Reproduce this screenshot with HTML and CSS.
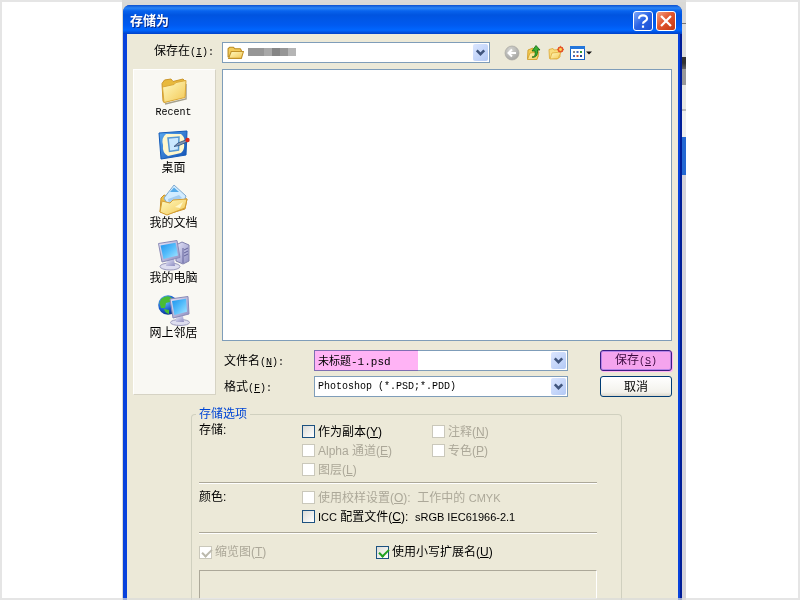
FILE: index.html
```html
<!DOCTYPE html>
<html lang="zh-CN">
<head>
<meta charset="utf-8">
<title>存储为</title>
<link rel="stylesheet" href="styles.css">
</head>
<body>
<svg class="defs" aria-hidden="true">
  <defs>
    <linearGradient id="gold" x1="0" y1="0" x2="1" y2="1"><stop offset="0" stop-color="#fffbc4"/><stop offset="1" stop-color="#f3c752"/></linearGradient>
    <linearGradient id="screen" x1="0" y1="0" x2="1" y2="1"><stop offset="0" stop-color="#1b92ec"/><stop offset=".5" stop-color="#55bdfb"/><stop offset="1" stop-color="#a8e6ff"/></linearGradient>
    <linearGradient id="metal" x1="0" y1="0" x2="1" y2="1"><stop offset="0" stop-color="#e6e6fa"/><stop offset="1" stop-color="#8d8dc0"/></linearGradient>
    <linearGradient id="blue" x1="0" y1="0" x2="1" y2="1"><stop offset="0" stop-color="#5aaaf0"/><stop offset="1" stop-color="#1250b4"/></linearGradient>
    <radialGradient id="globe" cx=".35" cy=".3" r=".75"><stop offset="0" stop-color="#70c8ff"/><stop offset=".6" stop-color="#1b5fd0"/><stop offset="1" stop-color="#0b2f85"/></radialGradient>
    <radialGradient id="disc" cx=".4" cy=".3" r=".8"><stop offset="0" stop-color="#d6d6d2"/><stop offset="1" stop-color="#9f9f9c"/></radialGradient>
  </defs>
</svg>
<main class="stage">
  <section class="window" aria-label="存储为">
    <header class="titlebar">
      <h1>存储为</h1>
      <button class="caption help" aria-label="帮助"><svg viewBox="0 0 20 20"><path d="M5.500 7.500C5.500 2.500 14.500 2.500 14.500 7.500C14.500 10.500 10 10 10 13M10 15V17.500" fill="none" stroke="#fff" stroke-width="2.400"/></svg></button>
      <button class="caption close" aria-label="关闭"><svg viewBox="0 0 20 20"><path d="M4.500 4.500L15.500 15.500M15.500 4.500L4.500 15.500" stroke="#fff" stroke-width="2.500"/></svg></button>
    </header>
    <div class="body">
      <div class="toolbar">
        <label class="song" for="folder">保存在<span class="mono">(<u>I</u>):</span></label>
        <div class="combo folder">
          <select id="folder"><option></option></select>
          <svg class="small-folder" viewBox="0 0 16 16"><path d="M1 12V4.500L2.500 3H6L7.500 4.500H12.500L13.500 6V12Z" fill="#f3cb5a" stroke="#b98a20"/><path d="M1.500 13.500L4 7H15.500L13.500 13.500Z" fill="url(#gold)" stroke="#c2932a"/></svg>
          <span class="mosaic"><i></i><i></i><i></i><i></i><i></i><i></i></span>
          <span class="arrow"><svg viewBox="0 0 14 16"><path d="M3.500 6L7 9.500L10.500 6" fill="none" stroke="#40557d" stroke-width="2.400"/></svg></span>
        </div>
        <div class="tools">
          <button aria-label="后退"><svg viewBox="0 0 16 16"><circle cx="8" cy="8" r="7" fill="url(#disc)" stroke="#aaa9a4" stroke-width=".7"/><path d="M12 8H5M8 4.500L4.500 8L8 11.500" fill="none" stroke="#fff" stroke-width="2"/></svg></button>
          <button aria-label="向上一级"><svg viewBox="0 0 16 16"><path d="M1.500 14L2 5L7 3L8 5L12 4V12L10 14.500Z" fill="#f4cc50" stroke="#d3a233"/><path d="M1.500 14.500L4 8L13 7L11 14.500Z" fill="url(#gold)" stroke="#d2a02c" stroke-width=".8"/><path d="M6 12C9 12 9.500 10 9 6H6L10 .5L14 5H11.500C12 10 10 13 6 12Z" fill="#39ad32" stroke="#146815" stroke-width=".8"/></svg></button>
          <button aria-label="新建文件夹"><svg viewBox="0 0 16 16"><path d="M1.500 13.500L1 4.500L5 3.500L6 5L11 4.500L12 8V12L9 14Z" fill="#f9dc7c" stroke="#e3b44a"/><path d="M2 14L4 8L13 7L10 13.500Z" fill="url(#gold)" stroke="#dfae3c" stroke-width=".8"/><circle cx="12.500" cy="4.500" r="2.200" fill="#ffd74e" stroke="#e4532b" stroke-width="1.500"/><path d="M12.500 .8V2M9 4.500H10M15 4.500H16M10 2L11 3M15 2L14 3M10 7L11 6M15 7L14 6" stroke="#e86436"/></svg></button>
          <button class="views" aria-label="查看方式"><svg viewBox="0 0 22 16"><rect x=".5" y="1.500" width="14" height="13" fill="#fff" stroke="#1763c5"/><path d="M0 2.500H15" stroke="#2376db" stroke-width="3"/><path d="M3 6h2v2H3z" fill="#888"/><path d="M6.500 6h2v2h-2z" fill="#4668bd"/><path d="M10 6h2v2h-2z" fill="#329632"/><path d="M3 10h2v2H3z" fill="#4668bd"/><path d="M6.500 10h2v2h-2z" fill="#bd523a"/><path d="M10 10h2v2h-2z" fill="#223e91"/><path d="M16 6.500H22L19 9.500Z" fill="#111"/></svg></button>
        </div>
      </div>
      <div class="browser">
        <nav class="places">
          <button><svg viewBox="0 0 32 32"><path d="M7 30L28 25V10" fill="none" stroke="#a5a08c" stroke-width="1.500"/><path d="M5 27L4 9.500L6.500 6L13 5L15 7.500L25 5L27 7V22L6 28.500Z" fill="#e8b93c" stroke="#cb962b"/><path d="M6 28.500L4.500 13L16 10.500L18 8.500L28 6.500L27 23.500Z" fill="url(#gold)" stroke="#dba838"/></svg><span class="mono">Recent</span></button>
          <button><svg viewBox="0 0 32 32"><path d="M1 4L29 2L28 26L3 30Z" fill="url(#blue)" stroke="#145bb8"/><path d="M8 5H23Q28 9 26 14Q27 21 23 24L10 27Q4 24 5 16Q3 9 8 5Z" fill="#fff7cc"/><path d="M10 9L21 8L20.500 21L11.500 22.500Z" fill="#cae7ff" stroke="#5698d4" stroke-width="1.500"/><path d="M16 17.500L20 14L29 10.500L30 12.500L21 16.500Z" fill="#8395b1" stroke="#294c7d" stroke-width=".8"/><circle cx="29.500" cy="11" r="2.200" fill="#db281b"/></svg><span>桌面</span></button>
          <button><svg viewBox="0 0 32 32"><path d="M2 28L3 14L6 11L13 13L29 15L27 25L10 30Z" fill="#edc049" stroke="#cb9129"/><path d="M6 14L16 1L28 12L24 22L11 23Z" fill="#d2ecff" stroke="#7faad0"/><path d="M12 8L16 3.500L21 8Z" fill="#54abea"/><path d="M10 15L21 11L24 14L11 20Z" fill="#a5cdf0"/><path d="M2 28L4 17L12 19L15 16L29 15L27 24L9 31Z" fill="url(#gold)" stroke="#d49e31"/><path d="M17 23L25 18L22 24Z" fill="#fff8cb"/></svg><span>我的文档</span></button>
          <button><svg viewBox="0 0 32 32"><path d="M18 6L24 3L31 6V22L25 25L18 22Z" fill="url(#metal)" stroke="#8282ad"/><path d="M25 9V24M26 11L30 9M26 14L30 12M26 17L30 15" stroke="#65659c"/><ellipse cx="12" cy="27.500" rx="10" ry="3.500" fill="#dedef0" stroke="#9b9bbd"/><path d="M9 20H16L17 27H8Z" fill="url(#metal)"/><path d="M.5 4.500L19 1.500L22 18.500L4 23Z" fill="url(#metal)" stroke="#8a8ab6"/><path d="M2.500 6.500L17.500 3.800L20 16.500L5.500 20Z" fill="url(#screen)"/></svg><span>我的电脑</span></button>
          <button><svg viewBox="0 0 32 32"><circle cx="10" cy="11" r="9.800" fill="url(#globe)"/><path d="M3 5Q9 0 14 4L12 8L8 9L7 14L3 14L1.500 9ZM6 15L11 16L11 20Q7 19 6 15Z" fill="#49bd35"/><ellipse cx="22" cy="28.500" rx="9.500" ry="3" fill="#dedef0" stroke="#9b9bbd"/><path d="M18 22H25L26 28H18Z" fill="url(#metal)"/><path d="M12 5L30 2.500L31 20L15 24Z" fill="url(#metal)" stroke="#8a8ab6"/><path d="M14 7L28 4.800L29 17.800L16.500 21Z" fill="url(#screen)"/></svg><span>网上邻居</span></button>
        </nav>
        <div class="content">
          <div class="files"></div>
          <div class="fields">
            <label class="song" for="name">文件名<span class="mono">(<u>N</u>):</span></label>
            <div class="combo name">
              <input id="name" class="song" type="text" value="未标题-1.psd">
              <span class="marker"></span>
              <button class="arrow" aria-label="展开"><svg viewBox="0 0 14 16"><path d="M3.500 6L7 9.500L10.500 6" fill="none" stroke="#40557d" stroke-width="2.400"/></svg></button>
            </div>
            <button class="push save">保存<span class="mono">(<u>S</u>)</span></button>
            <label class="song" for="format">格式<span class="mono">(<u>F</u>):</span></label>
            <div class="combo">
              <select id="format" class="mono"><option>Photoshop (*.PSD;*.PDD)</option></select>
              <span class="arrow"><svg viewBox="0 0 14 16"><path d="M3.500 6L7 9.500L10.500 6" fill="none" stroke="#40557d" stroke-width="2.400"/></svg></span>
            </div>
            <button class="push">取消</button>
          </div>
        </div>
      </div>
      <fieldset class="options">
        <legend>存储选项</legend>
        <div class="section">
          <span class="heading">存储:</span>
          <div class="checks">
            <label><input type="checkbox"><span>作为副本(<u>Y</u>)</span></label>
            <label class="off"><input type="checkbox" disabled><span>注释(<u>N</u>)</span></label>
            <label class="off"><input type="checkbox" disabled><span>Alpha 通道(<u>E</u>)</span></label>
            <label class="off"><input type="checkbox" disabled><span>专色(<u>P</u>)</span></label>
            <label class="off"><input type="checkbox" disabled><span>图层(<u>L</u>)</span></label>
          </div>
        </div>
        <div class="section">
          <span class="heading">颜色:</span>
          <div class="checks single">
            <label class="off"><input type="checkbox" disabled><span>使用校样设置(<u>O</u>):&nbsp; 工作中的 <span class="latin">CMYK</span></span></label>
            <label><input type="checkbox"><span><span class="latin">ICC</span> 配置文件(<u>C</u>):&nbsp; <span class="latin">sRGB IEC61966-2.1</span></span></label>
          </div>
        </div>
        <div class="extras">
          <label class="off"><input type="checkbox" checked disabled><span>缩览图(<u>T</u>)</span></label>
          <label><input type="checkbox" checked><span>使用小写扩展名(<u>U</u>)</span></label>
        </div>
        <div class="message"></div>
      </fieldset>
    </div>
  </section>
  <div class="behind"></div>
</main>
</body>
</html>
```
FILE: styles.css
```css
* { box-sizing: border-box; }

body {
  margin: 0;
  background: #fff;
  color: #000;
  font: 12px/16px "Liberation Sans", "Noto Sans CJK SC", sans-serif;
}

body::after {
  content: "";
  position: fixed;
  inset: 0;
  border: 2px solid rgba(218, 218, 218, 0.7);
  pointer-events: none;
}

button, input, select {
  margin: 0;
  font: inherit;
  color: inherit;
}

button {
  padding: 0;
  border: 0;
  background: none;
}

svg { display: block; }

.defs {
  position: absolute;
  width: 0;
  height: 0;
}

.song { font-family: "Liberation Mono", "Noto Sans CJK SC", monospace; }

.mono {
  font-family: "Liberation Mono", "Noto Sans CJK SC", monospace;
  font-size: 10px;
}

.latin { font-size: 11px; }

.stage {
  display: grid;
  grid-template-columns: minmax(0, 1fr) 4px;
  height: 100vh;
  margin: 0 114px 0 122px;
  padding: 5px 0 0 1px;
  overflow: hidden;
  background: #d9d9d6;
}

.behind {
  background: linear-gradient(#d9d9d9 18px, #777 18px 19px, #ddd 19px 52px, #333 52px 58px, #666 64px, #999 64px 80px, #e8e8e4 80px 104px, #bbb 104px 106px, #eee 106px 132px, #2468d2 132px 170px, #d5d3da 170px);
}

.window {
  display: flex;
  flex-direction: column;
  min-height: 595px;
  border-radius: 7px 7px 0 0;
  background: linear-gradient(90deg, #0842dc calc(100% - 2px), #001d98 0);
  overflow: hidden;
}

.titlebar {
  display: flex;
  align-items: center;
  gap: 3px;
  height: 29px;
  padding: 3px 6px 0 7px;
  background: linear-gradient(#0a4fd0, #2a84f5 3px, #0863ee 6px, #0054e0 10px, #005af0 20px, #0066ff 25px, #0040c8);
}

.titlebar h1 {
  flex: 1;
  margin: 0;
  color: #fff;
  font-size: 13px;
  line-height: 20px;
  text-shadow: 1px 1px #0a2c88;
}

.caption {
  width: 20px;
  height: 20px;
  border: 1px solid #fff;
  border-radius: 3px;
}

.caption svg { width: 18px; height: 18px; }
.help { background: linear-gradient(135deg, #7ba6fb, #2a62e4 50%, #1c50d2); }
.close { background: linear-gradient(135deg, #f2a084, #e2562e 45%, #c23710); }

.body {
  flex: 1;
  display: flex;
  flex-direction: column;
  margin: 0 4px;
  padding: 8px 6px 0;
  background: #ece9d8;
}

.toolbar {
  display: grid;
  grid-template-columns: 83px 268px 1fr;
  column-gap: 6px;
  align-items: center;
}

.toolbar label { padding-right: 2px; text-align: right; }

.combo {
  display: flex;
  position: relative;
  height: 21px;
  border: 1px solid #7f9db9;
  background: #fff;
}

.combo select,
.combo input {
  flex: 1;
  min-width: 0;
  padding: 0 20px 0 3px;
  border: 0;
  outline: 0;
  appearance: none;
  background: transparent;
}

.combo input { padding-top: 2px; font-size: 11px; }

.combo .arrow {
  position: absolute;
  top: 1px;
  right: 1px;
  bottom: 1px;
  width: 15px;
  border-radius: 2px;
  background: linear-gradient(135deg, #dbe6ff, #b3c9f5);
  pointer-events: none;
}

.arrow svg { width: 15px; height: 17px; }

.small-folder {
  position: absolute;
  top: 1px;
  left: 4px;
  width: 17px;
  height: 17px;
}

.mosaic {
  display: flex;
  position: absolute;
  top: 5px;
  left: 25px;
}

.mosaic i { width: 8px; height: 8px; background: #969696; }
.mosaic i:nth-child(3) { background: #a8a8a8; }
.mosaic i:nth-child(4) { background: #858585; }
.mosaic i:nth-child(6) { background: #b5b5b5; }

.tools {
  display: flex;
  gap: 6px;
  padding-left: 8px;
}

.tools svg { width: 16px; height: 16px; }
.tools .views svg { width: 22px; }

.browser {
  display: grid;
  grid-template-columns: 83px minmax(0, 1fr);
  gap: 6px;
  margin-top: 6px;
}

.places {
  display: flex;
  flex-direction: column;
  gap: 9px;
  height: 326px;
  padding: 4px 2px 0 0;
  border: 1px solid;
  border-color: #fff #d6d3c4 #d6d3c4 #fff;
  background: #f9f8f3;
}

.places button {
  display: flex;
  flex-direction: column;
  align-items: center;
  line-height: 14px;
}

.places svg { width: 32px; height: 32px; }

.files {
  height: 272px;
  border: 1px solid #7f9db9;
  background: #fff;
}

.fields {
  display: grid;
  grid-template-columns: 92px minmax(0, 1fr) 72px;
  row-gap: 5px;
  align-items: center;
  margin-top: 9px;
}

.fields label { padding: 4px 0 0 2px; }
.fields .combo { margin-right: 32px; }

.marker {
  position: absolute;
  top: -1px;
  left: -1px;
  width: 104px;
  height: 21px;
  background: #ffb3f5;
  mix-blend-mode: multiply;
  pointer-events: none;
}

.push {
  height: 21px;
  padding-top: 1px;
  border: 1px solid #003c74;
  border-radius: 3px;
  background: linear-gradient(#fff, #f3f2ec 80%, #dcd8cd);
}

.save {
  border-color: #3c1d82;
  background: #f5a4ee;
  box-shadow: inset 0 0 0 1px #b684e8, 1px 1px #ffb3f5;
  color: #3c0a40;
}

.options {
  flex: 1;
  min-width: 0;
  margin: 10px 50px 0 58px;
  padding: 0 24px 0 7px;
  border: 1px solid #d0d0bf;
  border-bottom: 0;
  border-radius: 4px 4px 0 0;
}

.options legend {
  height: 14px;
  margin-left: -3px;
  padding: 0 3px;
  color: #0046d5;
  line-height: 14px;
}

.section {
  display: grid;
  grid-template-columns: 103px minmax(0, 1fr);
  margin-bottom: 5px;
  padding-bottom: 3px;
  border-bottom: 1px solid #aca899;
  box-shadow: 0 1px #fff;
}

.heading { padding-top: 2px; line-height: 14px; }

.checks {
  display: grid;
  grid-template-columns: 130px minmax(0, 1fr);
  grid-auto-rows: 19px;
  padding-top: 1px;
}

.single {
  grid-template-columns: 1fr;
  padding: 0 0 3px;
}

.options label {
  display: flex;
  align-items: center;
  gap: 3px;
  white-space: nowrap;
}

.options input {
  width: 13px;
  height: 13px;
  appearance: none;
  border: 1px solid #1c5180;
  background: linear-gradient(135deg, #dcdcd7, #fff);
}

.options input:checked::after {
  content: "";
  display: block;
  width: 8px;
  height: 4px;
  margin: 2px 0 0 2px;
  border: solid #21a121;
  border-width: 0 0 2px 2px;
  transform: rotate(-45deg);
}

.options .off { color: #aca899; }
.options .off input { border-color: #cac8bb; background: #fff; }
.options .off input:checked::after { border-color: #bbb9ac; }

.extras {
  display: grid;
  grid-template-columns: 177px 1fr;
  padding-top: 6px;
}

.message {
  height: 29px;
  margin-top: 10px;
  border: 1px solid;
  border-color: #aca899 #fff #fff #aca899;
}
```
